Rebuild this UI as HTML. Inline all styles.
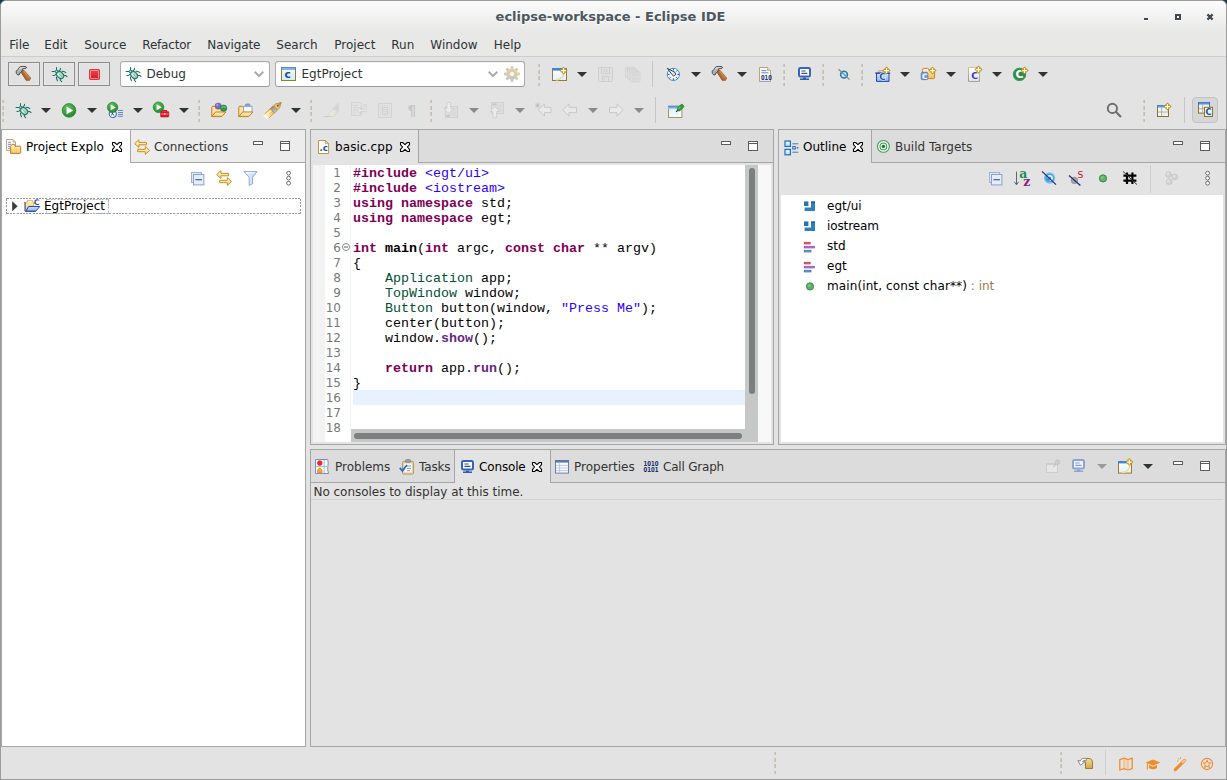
<!DOCTYPE html>
<html><head><meta charset="utf-8"><title>eclipse-workspace - Eclipse IDE</title>
<style>
*{box-sizing:border-box;margin:0;padding:0}
html,body{width:1227px;height:780px;overflow:hidden;background:#1c3b4c}
body{position:relative;font-family:"DejaVu Sans","Liberation Sans",sans-serif;font-size:12px;color:#2e3436}
.abs{position:absolute}
.ic{position:absolute;overflow:visible}
#win{position:absolute;left:0;top:0;width:1227px;height:780px;border:1px solid #9c9c9c;border-radius:6px 6px 0 0;overflow:hidden;background:#e3e3e3}
#win>*{margin:-1px 0 0 -1px}
#title{position:absolute;left:0;top:0;width:1227px;height:57px;background:linear-gradient(#fbfbfb 0px,#fbfbfb 2px,#e8e8e7 32px,#e8e8e7 57px);border-bottom:1px solid #cdcdcd}
#ttext{position:absolute;left:0;width:1221px;top:8px;text-align:center;font-weight:bold;font-size:13px;color:#4b575f;text-shadow:0 1px 0 rgba(255,255,255,.75);line-height:17px;white-space:nowrap}
.t{position:absolute;white-space:nowrap;line-height:16px}
.mi{position:absolute;white-space:nowrap;line-height:16px;color:#2e3436}
.dsep{position:absolute;width:2px;height:22.2px;background:linear-gradient(90deg,rgba(227,227,227,.55),rgba(227,227,227,.05)),repeating-linear-gradient(#c0b6a6 0px,#c0b6a6 3.4px,transparent 3.4px,transparent 6.2px)}
.code{position:absolute;font-family:"Liberation Mono","DejaVu Sans Mono",monospace;font-size:13.33px;line-height:15px;white-space:pre;color:#000}
.kw{color:#7f0055;font-weight:bold}
.inc{color:#2a00ff}
.ty{color:#005032}
.fn{font-weight:bold}
.mf{color:#642880;font-weight:bold}
.ln{position:absolute;text-align:right;font-size:12px;line-height:15px;color:#787878;white-space:pre}
</style></head><body>
<div id="win">
<div id="title"></div>
<div id="ttext">eclipse-workspace - Eclipse IDE</div>
<div class="abs" style="left:1144px;top:18px;width:4px;height:2px;background:#3b4a54;box-shadow:0 1px 0 #fff"></div>
<div class="abs" style="left:1175px;top:14px;width:6px;height:6px;border:2px solid #3b4a54;box-shadow:0 1px 0 #fff"></div>
<svg class="ic" style="left:1207px;top:14px" width="6" height="7" viewBox="0 0 6 7"><path d="M0.4 1.4L5.6 6.6M5.6 1.4L0.4 6.6" stroke="#fff" stroke-width="2.2"/><path d="M0.4 0.4L5.6 5.6M5.6 0.4L0.4 5.6" stroke="#3b4a54" stroke-width="2.2"/></svg>
<div class="mi" style="left:9.3px;top:37px;">File</div>
<div class="mi" style="left:44.3px;top:37px;">Edit</div>
<div class="mi" style="left:84.3px;top:37px;letter-spacing:0.15px">Source</div>
<div class="mi" style="left:142.3px;top:37px;letter-spacing:-0.2px">Refactor</div>
<div class="mi" style="left:207.3px;top:37px;letter-spacing:-0.09px">Navigate</div>
<div class="mi" style="left:276.3px;top:37px;">Search</div>
<div class="mi" style="left:334.3px;top:37px;">Project</div>
<div class="mi" style="left:391.3px;top:37px;">Run</div>
<div class="mi" style="left:430.3px;top:37px;">Window</div>
<div class="mi" style="left:493.8px;top:37px;">Help</div>
<div class="abs" style="left:8px;top:62px;width:32px;height:24px;border:1px solid #8c8c8c;background:#e2e2e2;box-shadow:inset 0 0 0 1px #e9e9e9"></div>
<svg class="ic" style="left:15px;top:66px" width="16" height="16" viewBox="0 0 16 16" ><linearGradient id="hmh" x1="0" y1="1" x2="1" y2="0"><stop offset="0" stop-color="#8a5a2a"/><stop offset="1" stop-color="#c98a4a"/></linearGradient><linearGradient id="hmg" x1="0" y1="0" x2="1" y2="1"><stop offset="0" stop-color="#dcdcdc"/><stop offset="1" stop-color="#74777a"/></linearGradient><path d="M7.4 4L9 4.3L15.8 12L14.5 14.5H11.2L6.2 6.5Z" fill="#b26c2e" stroke="#85491a" stroke-width="0.5" stroke-linejoin="round"/><path d="M8.6 5.2L14.6 12.2" stroke="#cc8e50" stroke-width="1.3"/><path d="M6.6 6.6L11.4 14.2" stroke="#7a4414" stroke-width="0.8" stroke-dasharray="1 0.8"/><path d="M5.3 0.5H10.8L11.7 1.5L10.5 2.6H7.8L7.5 4L6.2 6.2L4.7 7.1L4.5 8.6L2.9 9.1L1.3 7.4L1.2 4.9L3.1 3.7L3.5 2.2Z" fill="url(#hmg)" stroke="#454748" stroke-width="0.9" stroke-linejoin="round"/><path d="M4.2 3.4L6.4 1.6H9.4" stroke="#f0f0f0" stroke-width="0.9" fill="none" opacity="0.8"/></svg>
<div class="abs" style="left:43px;top:62px;width:32px;height:24px;border:1px solid #8c8c8c;background:#e2e2e2;box-shadow:inset 0 0 0 1px #e9e9e9"></div>
<svg class="ic" style="left:51px;top:67px" width="16" height="16" viewBox="0 0 16 16" ><g stroke="#1f6f50" stroke-width="1.05" fill="none" stroke-linecap="round" stroke-linejoin="round"><path d="M5.5 0.4V2.8M1.1 4.4H3.9M9.5 1.2L9.3 2.7L8.2 3.6M11 4.2L12.9 4.5L14.9 5.6M13.1 8.4L14.7 8.5L16 9.6M1.9 8.5L3.9 8.2L4.9 7.3M5.5 10.1L5.6 11.8L6.5 13.8M9.3 12.1L9.5 13.5L10.7 14.7"/></g><radialGradient id="bgd" cx="0.4" cy="0.35" r="0.7"><stop offset="0" stop-color="#f0f8e8"/><stop offset="1" stop-color="#86c46e"/></radialGradient><ellipse cx="9.1" cy="8" rx="2.9" ry="4.1" transform="rotate(-45 9.1 8)" fill="url(#bgd)" stroke="#1f7a98" stroke-width="1.2"/><path d="M8 6.8L10.6 9.6" stroke="#5aa650" stroke-width="0.7"/><circle cx="5.7" cy="4.6" r="1.4" fill="#4f9a4a" stroke="#1f7a98" stroke-width="1"/><circle cx="5.4" cy="4.3" r="0.6" fill="#eaf6e0"/></svg>
<div class="abs" style="left:78px;top:62px;width:32px;height:24px;border:1px solid #8c8c8c;background:#e2e2e2;box-shadow:inset 0 0 0 1px #e9e9e9"></div>
<svg class="ic" style="left:86px;top:67px" width="16" height="16" viewBox="0 0 16 16" ><linearGradient id="stp" x1="0" y1="0" x2="0" y2="1"><stop offset="0" stop-color="#ee4450"/><stop offset="1" stop-color="#e01424"/></linearGradient><rect x="3" y="2" width="11" height="11" rx="1.8" fill="#de2a36"/><rect x="4.4" y="3.4" width="8.2" height="8.2" rx="0.8" fill="url(#stp)" stroke="#f8aab0" stroke-width="0.9"/></svg>
<div class="abs" style="left:120px;top:61px;width:150px;height:26px;background:#fff;border:1px solid #acacac;border-bottom-color:#9a9a9a;border-radius:3px;box-shadow:inset 0 1px 1px rgba(0,0,0,.06)"></div>
<svg class="ic" style="left:125px;top:67px" width="16" height="16" viewBox="0 0 16 16" ><g stroke="#1f6f50" stroke-width="1.05" fill="none" stroke-linecap="round" stroke-linejoin="round"><path d="M5.5 0.4V2.8M1.1 4.4H3.9M9.5 1.2L9.3 2.7L8.2 3.6M11 4.2L12.9 4.5L14.9 5.6M13.1 8.4L14.7 8.5L16 9.6M1.9 8.5L3.9 8.2L4.9 7.3M5.5 10.1L5.6 11.8L6.5 13.8M9.3 12.1L9.5 13.5L10.7 14.7"/></g><radialGradient id="bgd" cx="0.4" cy="0.35" r="0.7"><stop offset="0" stop-color="#f0f8e8"/><stop offset="1" stop-color="#86c46e"/></radialGradient><ellipse cx="9.1" cy="8" rx="2.9" ry="4.1" transform="rotate(-45 9.1 8)" fill="url(#bgd)" stroke="#1f7a98" stroke-width="1.2"/><path d="M8 6.8L10.6 9.6" stroke="#5aa650" stroke-width="0.7"/><circle cx="5.7" cy="4.6" r="1.4" fill="#4f9a4a" stroke="#1f7a98" stroke-width="1"/><circle cx="5.4" cy="4.3" r="0.6" fill="#eaf6e0"/></svg>
<div class="t" style="left:146.5px;top:66px;color:#2e3436">Debug</div>
<svg class="ic" style="left:254px;top:71px" width="10" height="6" viewBox="0 0 10 6"><path d="M0.7 0.7L5 5L9.3 0.7" fill="none" stroke="#a9acad" stroke-width="2"/></svg>
<div class="abs" style="left:275px;top:61px;width:250px;height:26px;background:#fff;border:1px solid #acacac;border-bottom-color:#9a9a9a;border-radius:3px;box-shadow:inset 0 1px 1px rgba(0,0,0,.06)"></div>
<svg class="ic" style="left:281px;top:67px" width="16" height="16" viewBox="0 0 16 16" ><linearGradient id="cpj" x1="0" y1="0" x2="0" y2="1"><stop offset="0" stop-color="#f2f9fe"/><stop offset="1" stop-color="#d4ebfa"/></linearGradient><rect x="0.5" y="0.5" width="14" height="13" fill="url(#cpj)" stroke="#9a7a22" stroke-width="1"/><rect x="0" y="0" width="15" height="2.6" fill="#4a86c8"/><path d="M1 1.3H14" stroke="#b9d6f2" stroke-width="0.7"/><text x="6.7" y="10.9" font-family="DejaVu Sans, sans-serif" font-weight="bold" font-size="10.6" fill="#1d4f86" text-anchor="middle">c</text></svg>
<div class="t" style="left:301.5px;top:66px;color:#2e3436">EgtProject</div>
<svg class="ic" style="left:488px;top:71px" width="10" height="6" viewBox="0 0 10 6"><path d="M0.7 0.7L5 5L9.3 0.7" fill="none" stroke="#a9acad" stroke-width="2"/></svg>
<svg class="ic" style="left:504px;top:66px" width="16" height="16" viewBox="0 0 16 16" ><linearGradient id="gg" x1="0" y1="0" x2="0" y2="1"><stop offset="0" stop-color="#ded3a4"/><stop offset="1" stop-color="#cbc8bd"/></linearGradient><g fill="url(#gg)"><rect x="6.6" y="0" width="2.8" height="16" rx="0.8" transform="rotate(0 8 8)"/><rect x="6.6" y="0" width="2.8" height="16" rx="0.8" transform="rotate(45 8 8)"/><rect x="6.6" y="0" width="2.8" height="16" rx="0.8" transform="rotate(90 8 8)"/><rect x="6.6" y="0" width="2.8" height="16" rx="0.8" transform="rotate(135 8 8)"/><circle cx="8" cy="8" r="5.6"/></g><circle cx="8" cy="8" r="2.1" fill="#fff"/></svg>
<div class="dsep" style="left:538px;top:63.5px"></div>
<svg class="ic" style="left:552px;top:66px" width="16" height="16" viewBox="0 0 16 16" ><linearGradient id="nw" x1="0" y1="0" x2="0" y2="1"><stop offset="0" stop-color="#ffffff"/><stop offset="1" stop-color="#dff0fd"/></linearGradient><rect x="0.5" y="2.5" width="14" height="12" fill="url(#nw)" stroke="#9a7a2e" stroke-width="1"/><rect x="0" y="2" width="15" height="2.6" fill="#3f86cf"/><path d="M4 14Q11 13.6 12.4 6.2" stroke="#f3dc9a" stroke-width="1.6" fill="none"/><path d="M11.6 0.8999999999999995L15.3 4.6L11.6 8.3L7.8999999999999995 4.6Z" fill="#bf961f" stroke="#bf961f" stroke-width="0.5" stroke-linejoin="round"/><path d="M11.6 2.1999999999999993V7.000000000000001M9.2 4.6H14.0" stroke="#fffbe6" stroke-width="1.25"/></svg>
<svg class="ic" style="left:577px;top:72px" width="10" height="5" viewBox="0 0 10 5"><path d="M0 0H10L5 5Z" fill="#2e3436"/></svg>
<svg class="ic" style="left:598px;top:66px" width="16" height="16" viewBox="0 0 16 16" ><g transform="translate(0 1) scale(1.0)"><path d="M1.2 0.5H13.8Q14.5 0.5 14.5 1.2V13.8Q14.5 14.5 13.8 14.5H1.2Q0.5 14.5 0.5 13.8V1.2Q0.5 0.5 1.2 0.5Z" fill="#e0e0e0" stroke="#cfcfcf" stroke-width="1"/><path d="M3.5 0.5V6.5H11.5V0.5M4.5 14.5V9.5H10.5V14.5M6.2 10.8V13.4" fill="none" stroke="#cfcfcf" stroke-width="1"/><path d="M5 2.5H10M5 4.3H10" stroke="#cfcfcf" stroke-width="0.8"/></g></svg>
<svg class="ic" style="left:625px;top:66px" width="16" height="16" viewBox="0 0 16 16" ><g transform="translate(0 1) scale(0.7)"><path d="M1.2 0.5H13.8Q14.5 0.5 14.5 1.2V13.8Q14.5 14.5 13.8 14.5H1.2Q0.5 14.5 0.5 13.8V1.2Q0.5 0.5 1.2 0.5Z" fill="#e0e0e0" stroke="#cfcfcf" stroke-width="1"/><path d="M3.5 0.5V6.5H11.5V0.5M4.5 14.5V9.5H10.5V14.5M6.2 10.8V13.4" fill="none" stroke="#cfcfcf" stroke-width="1"/><path d="M5 2.5H10M5 4.3H10" stroke="#cfcfcf" stroke-width="0.8"/></g><g transform="translate(2.4 3.2) scale(0.7)"><path d="M1.2 0.5H13.8Q14.5 0.5 14.5 1.2V13.8Q14.5 14.5 13.8 14.5H1.2Q0.5 14.5 0.5 13.8V1.2Q0.5 0.5 1.2 0.5Z" fill="#e0e0e0" stroke="#cfcfcf" stroke-width="1"/><path d="M3.5 0.5V6.5H11.5V0.5M4.5 14.5V9.5H10.5V14.5M6.2 10.8V13.4" fill="none" stroke="#cfcfcf" stroke-width="1"/><path d="M5 2.5H10M5 4.3H10" stroke="#cfcfcf" stroke-width="0.8"/></g><g transform="translate(4.8 5.6) scale(0.7)"><path d="M1.2 0.5H13.8Q14.5 0.5 14.5 1.2V13.8Q14.5 14.5 13.8 14.5H1.2Q0.5 14.5 0.5 13.8V1.2Q0.5 0.5 1.2 0.5Z" fill="#e0e0e0" stroke="#cfcfcf" stroke-width="1"/><path d="M3.5 0.5V6.5H11.5V0.5M4.5 14.5V9.5H10.5V14.5M6.2 10.8V13.4" fill="none" stroke="#cfcfcf" stroke-width="1"/><path d="M5 2.5H10M5 4.3H10" stroke="#cfcfcf" stroke-width="0.8"/></g></svg>
<div class="abs" style="left:652px;top:61px;width:1px;height:26px;background:#c6c6c6"></div>
<svg class="ic" style="left:666px;top:66px" width="16" height="16" viewBox="0 0 16 16" ><circle cx="7.4" cy="8.4" r="6.1" fill="#f2f7fe" stroke="#3a88d4" stroke-width="0.9"/><path d="M13.30 8.40L11.30 8.40M11.57 12.57L10.16 11.16M7.40 14.30L7.40 12.30M3.23 12.57L4.64 11.16M1.50 8.40L3.50 8.40M7.40 2.50L7.40 4.50M11.57 4.23L10.16 5.64" stroke="#1f3f6f" stroke-width="0.9"/><path d="M1.3 2.3L9 6.4L9.8 8.6L7.6 9.9L6 8.6Z" fill="#f4ecc0" stroke="#1f3f8a" stroke-width="1" stroke-linejoin="round"/></svg>
<svg class="ic" style="left:691px;top:72px" width="10" height="5" viewBox="0 0 10 5"><path d="M0 0H10L5 5Z" fill="#2e3436"/></svg>
<svg class="ic" style="left:711px;top:66px" width="16" height="16" viewBox="0 0 16 16" ><linearGradient id="hmh" x1="0" y1="1" x2="1" y2="0"><stop offset="0" stop-color="#8a5a2a"/><stop offset="1" stop-color="#c98a4a"/></linearGradient><linearGradient id="hmg" x1="0" y1="0" x2="1" y2="1"><stop offset="0" stop-color="#dcdcdc"/><stop offset="1" stop-color="#74777a"/></linearGradient><path d="M7.4 4L9 4.3L15.8 12L14.5 14.5H11.2L6.2 6.5Z" fill="#b26c2e" stroke="#85491a" stroke-width="0.5" stroke-linejoin="round"/><path d="M8.6 5.2L14.6 12.2" stroke="#cc8e50" stroke-width="1.3"/><path d="M6.6 6.6L11.4 14.2" stroke="#7a4414" stroke-width="0.8" stroke-dasharray="1 0.8"/><path d="M5.3 0.5H10.8L11.7 1.5L10.5 2.6H7.8L7.5 4L6.2 6.2L4.7 7.1L4.5 8.6L2.9 9.1L1.3 7.4L1.2 4.9L3.1 3.7L3.5 2.2Z" fill="url(#hmg)" stroke="#454748" stroke-width="0.9" stroke-linejoin="round"/><path d="M4.2 3.4L6.4 1.6H9.4" stroke="#f0f0f0" stroke-width="0.9" fill="none" opacity="0.8"/></svg>
<svg class="ic" style="left:737px;top:72px" width="10" height="5" viewBox="0 0 10 5"><path d="M0 0H10L5 5Z" fill="#2e3436"/></svg>
<svg class="ic" style="left:758px;top:67px" width="16" height="16" viewBox="0 0 16 16" ><path d="M1.5 0.5H9.5L12.5 3.5V14.5H1.5Z" fill="#f6f8fc" stroke="#b8a877" stroke-width="1"/><path d="M9.5 0.5V3.5H12.5" fill="#e8d9a0" stroke="#b8a877" stroke-width="0.8"/><path d="M3.4 3.6H8.2M3.4 5.8H10.4" stroke="#6a83c4" stroke-width="1"/><rect x="1.5" y="13.8" width="11" height="0.9" fill="#8fa0c8"/><text x="8.4" y="13" font-family="DejaVu Sans, sans-serif" font-weight="bold" font-size="6.9" fill="#1c2f6b" text-anchor="middle" textLength="10.8" lengthAdjust="spacingAndGlyphs">010</text></svg>
<div class="dsep" style="left:783px;top:63.5px"></div>
<svg class="ic" style="left:797px;top:66px" width="16" height="16" viewBox="0 0 16 16" ><rect x="2" y="2" width="11" height="8.6" rx="1.4" fill="#ffffff" stroke="#3565b4" stroke-width="2"/><path d="M4.4 5H8.6M4.4 7.4H10.4" stroke="#2f4f9a" stroke-width="1.1"/><path d="M6 11.4H9V12.6H12V14H3V12.6H6Z" fill="#2f5fae"/></svg>
<div class="dsep" style="left:822px;top:63.5px"></div>
<svg class="ic" style="left:836px;top:66px" width="16" height="16" viewBox="0 0 16 16" ><circle cx="8" cy="8.6" r="3.4" fill="#cfe6f6" stroke="#1f7db8" stroke-width="1.6"/><path d="M2.6 3.2L13.6 13.6" stroke="#7d868c" stroke-width="1.2"/></svg>
<div class="dsep" style="left:861px;top:63.5px"></div>
<svg class="ic" style="left:875px;top:66px" width="16" height="16" viewBox="0 0 16 16" ><linearGradient id="ncp" x1="0" y1="0" x2="0" y2="1"><stop offset="0" stop-color="#d6eafd"/><stop offset="1" stop-color="#7fb2ee"/></linearGradient><path d="M3 6.6L4 4.6H7.6L8.6 6.6" fill="#f8d8c4" stroke="#b88a88" stroke-width="0.8"/><path d="M1.5 7.2H14V15.4H1.5Z" fill="url(#ncp)" stroke="#2a40b8" stroke-width="1" stroke-linejoin="round"/><path d="M0.2 7.1H15.2" stroke="#2a40b8" stroke-width="1.1"/><text x="7.4" y="14.4" font-family="DejaVu Sans, sans-serif" font-weight="bold" font-size="8.8" fill="#1f5a9a" stroke="#eaf4fe" stroke-width="1.2" paint-order="stroke" text-anchor="middle">C</text><path d="M11.5 0.7999999999999998L15.2 4.5L11.5 8.2L7.8 4.5Z" fill="#bf961f" stroke="#bf961f" stroke-width="0.5" stroke-linejoin="round"/><path d="M11.5 2.0999999999999996V6.8999999999999995M9.1 4.5H13.899999999999999" stroke="#fffbe6" stroke-width="1.25"/></svg>
<svg class="ic" style="left:900px;top:72px" width="10" height="5" viewBox="0 0 10 5"><path d="M0 0H10L5 5Z" fill="#2e3436"/></svg>
<svg class="ic" style="left:920px;top:66px" width="16" height="16" viewBox="0 0 16 16" ><linearGradient id="nf" x1="0" y1="0" x2="0" y2="1"><stop offset="0" stop-color="#fff0c4"/><stop offset="1" stop-color="#f6bc58"/></linearGradient><path d="M2.4 4.4Q2.4 2.4 4.2 2.4H7.4Q8.8 2.4 9 4H13.6Q14.6 4 14.6 5V11.6Q14.6 12.6 13.6 12.6H3.4Q2.4 12.6 2.4 11.6Z" fill="url(#nf)" stroke="#cf7f1f" stroke-width="1"/><path d="M3.8 3.6H7.8" stroke="#fff" stroke-width="1"/><rect x="1.2" y="6.4" width="6.6" height="7.2" rx="1.2" fill="#7f9fe0" stroke="#5a80c8" stroke-width="1"/><text x="4.6" y="12.6" font-family="DejaVu Sans, sans-serif" font-weight="bold" font-size="7.4" fill="#ffffff" text-anchor="middle">C</text><path d="M12.5 0.7999999999999998L16.2 4.5L12.5 8.2L8.8 4.5Z" fill="#bf961f" stroke="#bf961f" stroke-width="0.5" stroke-linejoin="round"/><path d="M12.5 2.0999999999999996V6.8999999999999995M10.100000000000001 4.5H14.899999999999999" stroke="#fffbe6" stroke-width="1.25"/></svg>
<svg class="ic" style="left:946px;top:72px" width="10" height="5" viewBox="0 0 10 5"><path d="M0 0H10L5 5Z" fill="#2e3436"/></svg>
<svg class="ic" style="left:967px;top:66px" width="16" height="16" viewBox="0 0 16 16" ><linearGradient id="ncf" x1="0" y1="0" x2="0" y2="1"><stop offset="0" stop-color="#ffffff"/><stop offset="1" stop-color="#dde8f8"/></linearGradient><linearGradient id="ncfb" x1="0" y1="0" x2="0" y2="1"><stop offset="0" stop-color="#d6c27c"/><stop offset="1" stop-color="#9c9c98"/></linearGradient><path d="M1.5 1.4H12.4V15.4H1.5Z" fill="url(#ncf)" stroke="url(#ncfb)" stroke-width="1"/><text x="7.5" y="12.8" font-family="DejaVu Sans, sans-serif" font-weight="bold" font-size="9.2" fill="#3a3ac8" text-anchor="middle">C</text><path d="M11.5 -0.20000000000000018L15.2 3.5L11.5 7.2L7.8 3.5Z" fill="#bf961f" stroke="#bf961f" stroke-width="0.5" stroke-linejoin="round"/><path d="M11.5 1.0999999999999999V5.9M9.1 3.5H13.899999999999999" stroke="#fffbe6" stroke-width="1.25"/></svg>
<svg class="ic" style="left:992px;top:72px" width="10" height="5" viewBox="0 0 10 5"><path d="M0 0H10L5 5Z" fill="#2e3436"/></svg>
<svg class="ic" style="left:1012px;top:66px" width="16" height="16" viewBox="0 0 16 16" ><circle cx="7.5" cy="8.4" r="6.6" fill="#2f8a4a"/><circle cx="7.5" cy="8.4" r="6.2" fill="none" stroke="#4aa262" stroke-width="0.8"/><text x="7.5" y="12.3" font-family="DejaVu Sans, sans-serif" font-weight="bold" font-size="11" fill="#ffffff" text-anchor="middle">C</text><path d="M12.5 0.7999999999999998L16.2 4.5L12.5 8.2L8.8 4.5Z" fill="#bf961f" stroke="#bf961f" stroke-width="0.5" stroke-linejoin="round"/><path d="M12.5 2.0999999999999996V6.8999999999999995M10.100000000000001 4.5H14.899999999999999" stroke="#fffbe6" stroke-width="1.25"/></svg>
<svg class="ic" style="left:1038px;top:72px" width="10" height="5" viewBox="0 0 10 5"><path d="M0 0H10L5 5Z" fill="#2e3436"/></svg>
<div class="dsep" style="left:2px;top:99.5px"></div>
<svg class="ic" style="left:15px;top:103px" width="16" height="16" viewBox="0 0 16 16" ><g stroke="#1f6f50" stroke-width="1.05" fill="none" stroke-linecap="round" stroke-linejoin="round"><path d="M5.5 0.4V2.8M1.1 4.4H3.9M9.5 1.2L9.3 2.7L8.2 3.6M11 4.2L12.9 4.5L14.9 5.6M13.1 8.4L14.7 8.5L16 9.6M1.9 8.5L3.9 8.2L4.9 7.3M5.5 10.1L5.6 11.8L6.5 13.8M9.3 12.1L9.5 13.5L10.7 14.7"/></g><radialGradient id="bgd" cx="0.4" cy="0.35" r="0.7"><stop offset="0" stop-color="#f0f8e8"/><stop offset="1" stop-color="#86c46e"/></radialGradient><ellipse cx="9.1" cy="8" rx="2.9" ry="4.1" transform="rotate(-45 9.1 8)" fill="url(#bgd)" stroke="#1f7a98" stroke-width="1.2"/><path d="M8 6.8L10.6 9.6" stroke="#5aa650" stroke-width="0.7"/><circle cx="5.7" cy="4.6" r="1.4" fill="#4f9a4a" stroke="#1f7a98" stroke-width="1"/><circle cx="5.4" cy="4.3" r="0.6" fill="#eaf6e0"/></svg>
<svg class="ic" style="left:41px;top:108px" width="10" height="5" viewBox="0 0 10 5"><path d="M0 0H10L5 5Z" fill="#2e3436"/></svg>
<svg class="ic" style="left:61px;top:102px" width="16" height="16" viewBox="0 0 16 16" ><radialGradient id="rg80" cx="0.4" cy="0.3" r="0.8"><stop offset="0" stop-color="#5cc45a"/><stop offset="1" stop-color="#1f7d2c"/></radialGradient><circle cx="8" cy="8.4" r="6.8" fill="url(#rg80)" stroke="#2a8a35" stroke-width="0.8"/><path d="M5.552 4.5920000000000005L12.216000000000001 8.4L5.552 12.208Z" fill="#fff"/></svg>
<svg class="ic" style="left:87px;top:108px" width="10" height="5" viewBox="0 0 10 5"><path d="M0 0H10L5 5Z" fill="#2e3436"/></svg>
<svg class="ic" style="left:107px;top:102px" width="16" height="16" viewBox="0 0 16 16" ><circle cx="5.8" cy="12" r="3.5" fill="#fdfeff" stroke="#2f6fc0" stroke-width="1.1"/><path d="M4.8 10.4L7 13.6M4.6 13.4L5.6 10.6" stroke="#2a3f7a" stroke-width="0.9"/><path d="M11 8.5H16M11 10.5H16M11 12.4H16M11 14.3H16" stroke="#5f7cba" stroke-width="0.9"/><radialGradient id="rg56" cx="0.4" cy="0.3" r="0.8"><stop offset="0" stop-color="#5cc45a"/><stop offset="1" stop-color="#1f7d2c"/></radialGradient><circle cx="5.6" cy="5.4" r="5.2" fill="url(#rg56)" stroke="#2a8a35" stroke-width="0.8"/><path d="M3.7279999999999998 2.488L8.824 5.4L3.7279999999999998 8.312000000000001Z" fill="#fff"/></svg>
<svg class="ic" style="left:133px;top:108px" width="10" height="5" viewBox="0 0 10 5"><path d="M0 0H10L5 5Z" fill="#2e3436"/></svg>
<svg class="ic" style="left:153px;top:102px" width="16" height="16" viewBox="0 0 16 16" ><radialGradient id="rg55" cx="0.4" cy="0.3" r="0.8"><stop offset="0" stop-color="#5cc45a"/><stop offset="1" stop-color="#1f7d2c"/></radialGradient><circle cx="5.5" cy="5.3" r="5.3" fill="url(#rg55)" stroke="#2a8a35" stroke-width="0.8"/><path d="M3.592 2.332L8.786 5.3L3.592 8.268Z" fill="#fff"/><rect x="7.6" y="9.6" width="8.2" height="5.4" rx="0.8" fill="#e01b24" stroke="#b80f18" stroke-width="0.6"/><path d="M10 9.6V8.5H13.4V9.6" fill="none" stroke="#d0121b" stroke-width="1.1"/><path d="M8 12H15.4" stroke="#f6989c" stroke-width="0.8"/><rect x="10.9" y="11.2" width="1.6" height="1.6" fill="#fbd0d2"/></svg>
<svg class="ic" style="left:179px;top:108px" width="10" height="5" viewBox="0 0 10 5"><path d="M0 0H10L5 5Z" fill="#2e3436"/></svg>
<div class="dsep" style="left:198px;top:99.5px"></div>
<svg class="ic" style="left:211px;top:102px" width="16" height="16" viewBox="0 0 16 16" ><linearGradient id="fo" x1="0" y1="0" x2="0" y2="1"><stop offset="0" stop-color="#fff4cc"/><stop offset="1" stop-color="#f7c968"/></linearGradient><path d="M0.8 14.5V5.4Q0.8 4.3 1.9 4.3H4.2L5.4 5.7H12.6V10" fill="#fbe3a6" stroke="#c77d1f" stroke-width="1" stroke-linejoin="round"/><circle cx="7.2" cy="4.1" r="3.2" fill="#7b62b8" stroke="#6a54a6" stroke-width="0.5"/><circle cx="6.4" cy="3.1" r="1.3" fill="#a898d8"/><circle cx="12.6" cy="6.2" r="3.3" fill="#2f9450" stroke="#268244" stroke-width="0.5"/><path d="M10.4 5.4Q12.6 4.4 14.8 5.4" stroke="#8fd0a0" stroke-width="0.9" fill="none"/><path d="M0.8 14.6L4.6 10H14.9L10.8 14.6Z" fill="url(#fo)" stroke="#c77d1f" stroke-width="1" stroke-linejoin="round"/></svg>
<svg class="ic" style="left:238px;top:102px" width="16" height="16" viewBox="0 0 16 16" ><linearGradient id="fo" x1="0" y1="0" x2="0" y2="1"><stop offset="0" stop-color="#fff4cc"/><stop offset="1" stop-color="#f7c968"/></linearGradient><path d="M0.8 14.5V5.4Q0.8 4.3 1.9 4.3H4.2L5.4 5.7H12.6V10" fill="#fbe3a6" stroke="#c77d1f" stroke-width="1" stroke-linejoin="round"/><path d="M7.4 4.2V3Q7.4 2 8.4 2H11Q12 2 12 3V4.2Z" fill="#9aa8c8" stroke="#7a8cb8" stroke-width="0.8"/><rect x="5.6" y="4.3" width="8.4" height="6" fill="#f4f7fd" stroke="#8a9cc6" stroke-width="0.9"/><path d="M0.8 14.6L4.6 10H14.9L10.8 14.6Z" fill="url(#fo)" stroke="#c77d1f" stroke-width="1" stroke-linejoin="round"/></svg>
<svg class="ic" style="left:265px;top:102px" width="16" height="16" viewBox="0 0 16 16" ><g transform="translate(8.2 8) rotate(-43)"><linearGradient id="pnb" x1="0" y1="0" x2="1" y2="0"><stop offset="0" stop-color="#fffef4"/><stop offset="1" stop-color="#f0b840"/></linearGradient><linearGradient id="pnk" x1="0" y1="0" x2="0" y2="1"><stop offset="0" stop-color="#8e8a86"/><stop offset="1" stop-color="#c9c5c0"/></linearGradient><path d="M-11 -2.9H-1V2.9H-11Z" fill="url(#pnb)"/><path d="M-9 -2.9H-1M-9 2.9H-1" stroke="#d49a2a" stroke-width="0.8"/><path d="M-8 -1H-1.5" stroke="#fff6d0" stroke-width="1.4" opacity="0.9"/><rect x="-1.2" y="-3.1" width="4.2" height="6.2" rx="0.6" fill="url(#pnk)" stroke="#8a7a62" stroke-width="0.6"/><path d="M3 -2.8L6.2 -2.7L11 0L6.2 2.7L3 2.8Z" fill="#f2c458" stroke="#c08828" stroke-width="0.8" stroke-linejoin="round"/><path d="M6.6 0H10" stroke="#2a4a9a" stroke-width="0.7"/><circle cx="6.2" cy="0" r="0.85" fill="#2a4a9a"/></g></svg>
<svg class="ic" style="left:291px;top:108px" width="10" height="5" viewBox="0 0 10 5"><path d="M0 0H10L5 5Z" fill="#2e3436"/></svg>
<div class="dsep" style="left:310px;top:99.5px"></div>
<svg class="ic" style="left:323px;top:102px" width="16" height="16" viewBox="0 0 16 16" ><path d="M0.4 14.5H9" stroke="#cdcdcd" stroke-width="1"/><path d="M4.6 14L9.6 7L15.4 1.2V9.6L11.4 14Z" fill="#dcdbd8" stroke="#d2d2d2" stroke-width="0.6"/><path d="M9.6 7L14.6 9.4L15.4 1.2Z" fill="#d4d4d4"/><path d="M5 14L9.6 7.4L13.4 9.6L10 14Z" fill="#e8e6dc"/></svg>
<svg class="ic" style="left:351px;top:102px" width="16" height="16" viewBox="0 0 16 16" ><path d="M0.5 0.5H8.5L10.5 2.5V13.5H0.5Z" fill="#e2e2e2" stroke="#d1d1d1" stroke-width="0.9"/><path d="M2.4 3.4H7M2.4 5.6H7.4M2.4 7.8H5M2.4 10H4M2.4 12H4" stroke="#d1d1d1" stroke-width="0.8"/><path d="M13 2.5H15.2V9.6H9.6V11.6L5.8 8.5L9.6 5.4V7.4H13Z" fill="#e8e8e8" stroke="#d1d1d1" stroke-width="0.9" stroke-linejoin="round"/></svg>
<svg class="ic" style="left:377px;top:102px" width="16" height="16" viewBox="0 0 16 16" ><rect x="1.5" y="1.5" width="13" height="14" fill="#e2e2e2" stroke="#d1d1d1" stroke-width="0.9"/><rect x="5.5" y="5.5" width="5" height="6.4" fill="none" stroke="#d1d1d1" stroke-width="1"/><path d="M5.5 7.6H10.5M5.5 9.7H10.5" stroke="#d1d1d1" stroke-width="0.9"/><path d="M3.6 3.4V14M12.4 3.4V14" stroke="#d1d1d1" stroke-width="0.9" stroke-dasharray="0.9 1.2"/><path d="M5.4 3.6H10.6M5.4 13.6H10.6" stroke="#d1d1d1" stroke-width="0.8" stroke-dasharray="1 0.6"/></svg>
<div class="t" style="left:407.5px;top:102px;color:#c8c8c8;font-size:13.5px;font-weight:bold">¶</div>
<div class="dsep" style="left:430px;top:99.5px"></div>
<svg class="ic" style="left:443px;top:102px" width="16" height="16" viewBox="0 0 16 16" ><rect x="2.5" y="4.5" width="12" height="11" fill="#dedede" stroke="#d1d1d1" stroke-width="1"/><path d="M8 7H13M8 9H13M8 11H13M8 13H13" stroke="#d0d0d0" stroke-width="0.8" stroke-dasharray="1.4 0.8"/><rect x="3" y="13" width="4" height="1.6" fill="#c4c4c4"/><path d="M4 0.5H7.6V6.5H10.4L5.8 11.6L1 6.5H4Z" fill="#ececec" stroke="#d1d1d1" stroke-width="1" stroke-linejoin="round"/></svg>
<svg class="ic" style="left:469px;top:108px" width="10" height="5" viewBox="0 0 10 5"><path d="M0 0H10L5 5Z" fill="#8a8a8a"/></svg>
<svg class="ic" style="left:489px;top:102px" width="16" height="16" viewBox="0 0 16 16" ><rect x="2.5" y="0.5" width="12" height="11" fill="#dedede" stroke="#d1d1d1" stroke-width="1"/><path d="M8 3H13M8 5H13M8 7H13M8 9H13" stroke="#d0d0d0" stroke-width="0.8" stroke-dasharray="1.4 0.8"/><rect x="3.4" y="1.6" width="4" height="1.6" fill="#c4c4c4"/><path d="M4 15.5H7.6V9.5H10.4L5.8 4.4L1 9.5H4Z" fill="#ececec" stroke="#d1d1d1" stroke-width="1" stroke-linejoin="round"/></svg>
<svg class="ic" style="left:515px;top:108px" width="10" height="5" viewBox="0 0 10 5"><path d="M0 0H10L5 5Z" fill="#8a8a8a"/></svg>
<svg class="ic" style="left:535px;top:102px" width="16" height="16" viewBox="0 0 16 16" ><path d="M3.4 8L9.4 2V5.4H16V10.6H9.4V14Z" fill="#e9e9e9" stroke="#c8c8c8" stroke-width="1" stroke-linejoin="round"/><path d="M2.6 0.4V6.4M0 3.4H5.4M0.8 1.4L4.6 5.4M4.6 1.4L0.8 5.4" stroke="#bdbdbd" stroke-width="0.8"/></svg>
<svg class="ic" style="left:562px;top:102px" width="16" height="16" viewBox="0 0 16 16" ><path d="M0.8 8L7 1.8V5.4H14.5V10.6H7V14.2Z" fill="#e9e9e9" stroke="#c8c8c8" stroke-width="1" stroke-linejoin="round"/></svg>
<svg class="ic" style="left:588px;top:108px" width="10" height="5" viewBox="0 0 10 5"><path d="M0 0H10L5 5Z" fill="#8a8a8a"/></svg>
<svg class="ic" style="left:608px;top:102px" width="16" height="16" viewBox="0 0 16 16" ><path d="M15.2 8L9 1.8V5.4H1.5V10.6H9V14.2Z" fill="#e9e9e9" stroke="#c8c8c8" stroke-width="1" stroke-linejoin="round"/></svg>
<svg class="ic" style="left:634px;top:108px" width="10" height="5" viewBox="0 0 10 5"><path d="M0 0H10L5 5Z" fill="#8a8a8a"/></svg>
<div class="abs" style="left:655px;top:97px;width:1px;height:26px;background:#c6c6c6"></div>
<svg class="ic" style="left:668px;top:103px" width="16" height="16" viewBox="0 0 16 16" ><linearGradient id="pn" x1="0" y1="0" x2="1" y2="1"><stop offset="0" stop-color="#d6f0fc"/><stop offset="1" stop-color="#ffffff"/></linearGradient><linearGradient id="pnt" x1="0" y1="0" x2="0" y2="1"><stop offset="0" stop-color="#3f7fc4"/><stop offset="1" stop-color="#a6ccf0"/></linearGradient><rect x="0.5" y="3.3" width="13.4" height="11.2" fill="url(#pn)" stroke="#a39466" stroke-width="1"/><rect x="0" y="2.8" width="14.4" height="3" fill="url(#pnt)"/><path d="M8.1 8.8L10 7" stroke="#222" stroke-width="1.1"/><path d="M8.6 10.4L9.8 11.6" stroke="#a8cfe6" stroke-width="0.9"/><g transform="rotate(-45 12.4 4.6)"><rect x="8.6" y="2.8" width="7.6" height="3.8" rx="1.7" fill="#2f9a3a" stroke="#1f7a2a" stroke-width="0.6"/><rect x="10.2" y="3.4" width="3" height="1.2" rx="0.6" fill="#6fca5a"/></g></svg>
<svg class="ic" style="left:1106px;top:102px" width="16" height="16" viewBox="0 0 16 16" ><circle cx="6.4" cy="6.4" r="4.6" fill="none" stroke="#6e6e6e" stroke-width="1.9"/><path d="M9.8 9.8L15 15" stroke="#6e6e6e" stroke-width="2.2"/></svg>
<div class="dsep" style="left:1143px;top:99.5px"></div>
<svg class="ic" style="left:1156px;top:102px" width="16" height="16" viewBox="0 0 16 16" ><rect x="1.5" y="3.5" width="11" height="11" fill="#eaf6fe" stroke="#8a6f2e" stroke-width="1"/><rect x="1" y="3" width="12" height="2.4" fill="#3d7fd0"/><path d="M2 4.2H12" stroke="#9cc4ee" stroke-width="0.6"/><path d="M5.6 5.4V14M2 10.0H12" stroke="#b8a67c" stroke-width="0.9"/><path d="M7.6 12.6L10.6 9.8" stroke="#f0d690" stroke-width="0.9"/><path d="M11.5 0.7000000000000002L15.3 4.5L11.5 8.3L7.7 4.5Z" fill="#bf961f" stroke="#bf961f" stroke-width="0.5" stroke-linejoin="round"/><path d="M11.5 2.0V7.000000000000001M9.0 4.5H14.0" stroke="#fffbe6" stroke-width="1.25"/></svg>
<div class="abs" style="left:1184px;top:97px;width:1px;height:26px;background:#c6c6c6"></div>
<div class="abs" style="left:1192px;top:97px;width:26px;height:26px;background:#d6d6d6;border:1px solid #c3c3c3;border-radius:4px"></div>
<svg class="ic" style="left:1197px;top:102px" width="16" height="16" viewBox="0 0 16 16" ><rect x="1.5" y="0.5" width="11" height="10.6" fill="#eaf6fe" stroke="#8a6f2e" stroke-width="1"/><rect x="1" y="0" width="12" height="2.4" fill="#2f6fd0"/><path d="M2 1.2H12" stroke="#9cc4ee" stroke-width="0.6"/><path d="M5.6 2.4V10.6M2 6.7H12" stroke="#b8a67c" stroke-width="0.9"/><linearGradient id="cpb" x1="0" y1="0" x2="1" y2="1"><stop offset="0" stop-color="#ffffff"/><stop offset="1" stop-color="#d8ecfb"/></linearGradient><rect x="7.5" y="5.3" width="8" height="9.2" fill="url(#cpb)" stroke="#8a6f2e" stroke-width="1"/><text x="11.6" y="13.1" font-family="DejaVu Sans, sans-serif" font-weight="bold" font-size="8.2" fill="#1f4f8c" text-anchor="middle">C</text></svg>
<div class="abs" style="left:1px;top:129px;width:305px;height:618px;border:1px solid #a6a6a6;background:#e3e3e3"></div>
<div class="abs" style="left:2px;top:130px;width:303px;height:32px;background:#ececec"></div>
<div class="abs" style="left:2px;top:162px;width:303px;height:1px;background:#a6a6a6"></div>
<div class="abs" style="left:2px;top:130px;width:129px;height:33px;background:#fff;border-right:1px solid #a6a6a6"></div>
<div class="abs" style="left:2px;top:163px;width:303px;height:583px;background:#fff"></div>
<svg class="ic" style="left:6px;top:139px" width="16" height="16" viewBox="0 0 16 16" ><path d="M0.5 0.5H7L9.5 3V11.4H0.5Z" fill="#f4f6fb" stroke="#b5a77a" stroke-width="1"/><path d="M7 0.5V3H9.5" fill="#e6d9a8" stroke="#b5a77a" stroke-width="0.7"/><path d="M2 3.4H5M2 5.4H5M2 7.4H4.4M2 9.4H4" stroke="#6f8fd0" stroke-width="0.9"/><linearGradient id="pe" x1="0" y1="0" x2="0" y2="1"><stop offset="0" stop-color="#fff3c4"/><stop offset="1" stop-color="#f6c455"/></linearGradient><path d="M4.6 14.4V7.4Q4.6 6.6 5.4 6.4L6 5.4H8.4L9 7.2H13.8Q14.7 7.2 14.7 8.2V13.5Q14.7 14.4 13.8 14.4Z" fill="url(#pe)" stroke="#c07c28" stroke-width="1" stroke-linejoin="round"/></svg>
<div class="t" style="left:26px;top:139px;color:#000">Project Explo</div>
<svg class="ic" style="left:112px;top:142px" width="10" height="10" viewBox="0 0 10 10"><path d="M0.5 0.5H2.6L5 2.6L7.4 0.5H9.5V2.6L7.4 5L9.5 7.4V9.5H7.4L5 7.4L2.6 9.5H0.5V7.4L2.6 5L0.5 2.6Z" fill="#fff" stroke="#000" stroke-width="1.1" stroke-linejoin="round"/></svg>
<svg class="ic" style="left:134px;top:139px" width="16" height="16" viewBox="0 0 16 16" ><linearGradient id="cn" x1="0" y1="0" x2="0" y2="1"><stop offset="0" stop-color="#fffbe8"/><stop offset="1" stop-color="#f6d27a"/></linearGradient><path d="M0.7 4.6L4.9 0.7V3.4H12.5V5.8H4.9V8.5Z" fill="url(#cn)" stroke="#c9901f" stroke-width="1" stroke-linejoin="round"/><path d="M15.5 11.5L11.3 7.6V10.3H3.7V12.7H11.3V15.4Z" fill="url(#cn)" stroke="#c9901f" stroke-width="1" stroke-linejoin="round"/></svg>
<div class="t" style="left:154px;top:139px;color:#333">Connections</div>
<div class="abs" style="left:253px;top:141px;width:10px;height:4px;background:#fff;border:1px solid #5a5a5a;border-radius:0.5px;box-shadow:0 0 1px rgba(255,255,255,.7)"></div>
<div class="abs" style="left:280px;top:141px;width:10px;height:10px;background:#fff;border:1px solid #5a5a5a;border-radius:0.5px;box-shadow:0 0 1px rgba(255,255,255,.7)"></div>
<div class="abs" style="left:280px;top:143px;width:10px;height:1px;background:#5a5a5a"></div>
<svg class="ic" style="left:190px;top:170px" width="16" height="16" viewBox="0 0 16 16" ><rect x="1.5" y="2.5" width="10" height="10" fill="#dfe9f7" stroke="#9db3d4" stroke-width="1"/><rect x="3.5" y="4.5" width="10.4" height="10.4" fill="#e4edf9" stroke="#8aa2ca" stroke-width="1"/><path d="M5.4 9.7H12" stroke="#1a4a8a" stroke-width="1.1"/></svg>
<svg class="ic" style="left:216px;top:170px" width="16" height="16" viewBox="0 0 16 16" ><linearGradient id="cn" x1="0" y1="0" x2="0" y2="1"><stop offset="0" stop-color="#fffbe8"/><stop offset="1" stop-color="#f6d27a"/></linearGradient><path d="M0.7 4.6L4.9 0.7V3.4H12.5V5.8H4.9V8.5Z" fill="url(#cn)" stroke="#c9901f" stroke-width="1" stroke-linejoin="round"/><path d="M15.5 11.5L11.3 7.6V10.3H3.7V12.7H11.3V15.4Z" fill="url(#cn)" stroke="#c9901f" stroke-width="1" stroke-linejoin="round"/></svg>
<svg class="ic" style="left:243px;top:170px" width="16" height="16" viewBox="0 0 16 16" ><linearGradient id="fl" x1="0" y1="0" x2="1" y2="0"><stop offset="0" stop-color="#f4f9fe"/><stop offset="1" stop-color="#bcd2ec"/></linearGradient><path d="M1 1.6H14L9.6 7.2V13.6L6.2 15.4V7.2Z" fill="url(#fl)" stroke="#8fa8cc" stroke-width="1" stroke-linejoin="round"/><path d="M2.8 2.8H12.2" stroke="#fff" stroke-width="0.9"/></svg>
<svg class="ic" style="left:284px;top:170px" width="16" height="16" viewBox="0 0 16 16" ><g fill="#fff" stroke="#5c5c5c" stroke-width="0.9"><circle cx="4.6" cy="3.2" r="1.9"/><circle cx="4.6" cy="8.2" r="1.9"/><circle cx="4.6" cy="13.2" r="1.9"/></g></svg>
<div class="abs" style="left:6px;top:198px;width:295px;height:1px;background:repeating-linear-gradient(90deg,#969696 0px,#969696 2px,transparent 2px,transparent 3.2px);background-position:1px 0"></div>
<div class="abs" style="left:6px;top:212.5px;width:295px;height:1px;background:repeating-linear-gradient(90deg,#969696 0px,#969696 2px,transparent 2px,transparent 3.2px);background-position:1px 0"></div>
<div class="abs" style="left:6px;top:198px;width:1px;height:15.5px;background:repeating-linear-gradient(180deg,#969696 0px,#969696 2px,transparent 2px,transparent 3.2px);background-position:0 1px"></div>
<div class="abs" style="left:300px;top:198px;width:1px;height:15.5px;background:repeating-linear-gradient(180deg,#969696 0px,#969696 2px,transparent 2px,transparent 3.2px);background-position:0 1px"></div>
<svg class="ic" style="left:12px;top:200.5px" width="6" height="10.5" viewBox="0 0 6 10.5"><path d="M0.2 0.2L5.6 5.25L0.2 10.3Z" fill="#3a3a3a"/></svg>
<svg class="ic" style="left:24px;top:197px" width="16" height="16" viewBox="0 0 16 16" ><linearGradient id="cf" x1="0" y1="0" x2="0" y2="1"><stop offset="0" stop-color="#cfe8fd"/><stop offset="1" stop-color="#86b8ee"/></linearGradient><linearGradient id="cfy" x1="0" y1="0" x2="0" y2="1"><stop offset="0" stop-color="#fff0c0"/><stop offset="1" stop-color="#f4cf78"/></linearGradient><path d="M1.4 13.4V5.6H3L3.4 3.4H8.6L9 5.6H9.6V9.4H4.6L1.8 13.6Z" fill="url(#cfy)" stroke="#d4a24a" stroke-width="0.8" stroke-linejoin="round"/><path d="M4.4 4.4H7.6" stroke="#fffbe8" stroke-width="1"/><path d="M1 5.8V14.3H11.6" fill="none" stroke="#2a44b0" stroke-width="1"/><path d="M0 5.6H1.6" stroke="#7a5a9a" stroke-width="0.9"/><path d="M2 14.1L4.6 9.5H15.8L11.8 14.1Z" fill="url(#cf)" stroke="#2a44b0" stroke-width="1" stroke-linejoin="round"/><text x="12.6" y="7.5" font-family="DejaVu Sans, sans-serif" font-weight="bold" font-size="7.7" fill="#1f5a9a" text-anchor="middle">C</text></svg>
<div class="abs" style="left:46px;top:198.6px;width:63px;height:1px;background:repeating-linear-gradient(90deg,#b4b4b4 0px,#b4b4b4 2px,transparent 2px,transparent 3.2px);background-position:1.6px 0"></div>
<div class="abs" style="left:46px;top:212.6px;width:63px;height:1px;background:repeating-linear-gradient(90deg,#b4b4b4 0px,#b4b4b4 2px,transparent 2px,transparent 3.2px);background-position:1.6px 0"></div>
<div class="abs" style="left:46px;top:198.6px;width:1px;height:15px;background:repeating-linear-gradient(180deg,#b4b4b4 0px,#b4b4b4 2px,transparent 2px,transparent 3.2px);background-position:0 1.6px"></div>
<div class="abs" style="left:108px;top:198.6px;width:1px;height:15px;background:repeating-linear-gradient(180deg,#b4b4b4 0px,#b4b4b4 2px,transparent 2px,transparent 3.2px);background-position:0 1.6px"></div>
<div class="t" style="left:44px;top:197.5px;color:#000">EgtProject</div>
<div class="abs" style="left:310px;top:129px;width:464px;height:316px;border:1px solid #a6a6a6;background:#e3e3e3"></div>
<div class="abs" style="left:311px;top:130px;width:462px;height:32px;background:#dcdcdc"></div>
<div class="abs" style="left:311px;top:162px;width:462px;height:1px;background:#a6a6a6"></div>
<div class="abs" style="left:311px;top:130px;width:108px;height:33px;background:#e3e3e3;border-right:1px solid #a6a6a6"></div>
<svg class="ic" style="left:317px;top:139px" width="16" height="16" viewBox="0 0 16 16" ><path d="M1.5 1.5H8.4L11.6 4.6V14.5H1.5Z" fill="#fbfcfe" stroke="#b39a4e" stroke-width="1"/><path d="M8.4 1.5V4.6H11.6Z" fill="#ecd9a0" stroke="#b39a4e" stroke-width="0.7"/><text x="6.7" y="11.8" font-family="DejaVu Sans, sans-serif" font-weight="bold" font-size="8.6" fill="#1f4f86" text-anchor="middle">.c</text></svg>
<div class="t" style="left:335px;top:139px;color:#000;letter-spacing:0.1px">basic.cpp</div>
<svg class="ic" style="left:400px;top:142px" width="10" height="10" viewBox="0 0 10 10"><path d="M0.5 0.5H2.6L5 2.6L7.4 0.5H9.5V2.6L7.4 5L9.5 7.4V9.5H7.4L5 7.4L2.6 9.5H0.5V7.4L2.6 5L0.5 2.6Z" fill="#fff" stroke="#000" stroke-width="1.1" stroke-linejoin="round"/></svg>
<div class="abs" style="left:721px;top:141px;width:10px;height:4px;background:#fff;border:1px solid #5a5a5a;border-radius:0.5px;box-shadow:0 0 1px rgba(255,255,255,.7)"></div>
<div class="abs" style="left:748px;top:141px;width:10px;height:10px;background:#fff;border:1px solid #5a5a5a;border-radius:0.5px;box-shadow:0 0 1px rgba(255,255,255,.7)"></div>
<div class="abs" style="left:748px;top:143px;width:10px;height:1px;background:#5a5a5a"></div>
<div class="abs" style="left:313px;top:165px;width:432px;height:277px;background:#fff"></div>
<div class="abs" style="left:313px;top:165px;width:12px;height:277px;background:#f3f3f3"></div>
<div class="abs" style="left:350px;top:165px;width:1px;height:264px;background:#f2f2f2"></div>
<div class="abs" style="left:353px;top:390px;width:392px;height:15px;background:#e8f2fe"></div>
<div class="abs" style="left:745px;top:165px;width:13px;height:277px;background:#c6c8c7"></div>
<div class="abs" style="left:749px;top:168px;width:6px;height:226px;background:#7b7f80;border-radius:3px"></div>
<div class="abs" style="left:758px;top:165px;width:13px;height:277px;background:#f8f8f8"></div>
<div class="abs" style="left:351px;top:429px;width:394px;height:13px;background:#c6c8c7"></div>
<div class="abs" style="left:354px;top:433px;width:388px;height:6px;background:#7b7f80;border-radius:3px"></div>
<div class="ln" style="left:313px;top:166px;width:28px">1
2
3
4
5
6
7
8
9
10
11
12
13
14
15
16
17
18</div>
<div class="code" style="left:353px;top:166px"><span class="kw">#include</span> <span class="inc">&lt;egt/ui&gt;</span>
<span class="kw">#include</span> <span class="inc">&lt;iostream&gt;</span>
<span class="kw">using</span> <span class="kw">namespace</span> std;
<span class="kw">using</span> <span class="kw">namespace</span> egt;

<span class="kw">int</span> <span class="fn">main</span>(<span class="kw">int</span> argc, <span class="kw">const</span> <span class="kw">char</span> ** argv)
{
    <span class="ty">Application</span> app;
    <span class="ty">TopWindow</span> window;
    <span class="ty">Button</span> button(window, <span class="inc">"Press Me"</span>);
    center(button);
    window.<span class="mf">show</span>();

    <span class="kw">return</span> app.<span class="mf">run</span>();
}


</div>
<svg class="ic" style="left:342px;top:243px" width="8" height="8" viewBox="0 0 8 8"><circle cx="4" cy="4" r="3.5" fill="#fff" stroke="#8a8a8a" stroke-width="1"/><path d="M2 4H6" stroke="#5a5a5a" stroke-width="1"/></svg>
<div class="abs" style="left:778px;top:129px;width:448px;height:316px;border:1px solid #a6a6a6;background:#e3e3e3"></div>
<div class="abs" style="left:779px;top:130px;width:446px;height:32px;background:#dcdcdc"></div>
<div class="abs" style="left:779px;top:162px;width:446px;height:1px;background:#a6a6a6"></div>
<div class="abs" style="left:779px;top:130px;width:93px;height:33px;background:#e3e3e3;border-right:1px solid #a6a6a6"></div>
<svg class="ic" style="left:784px;top:140px" width="16" height="16" viewBox="0 0 16 16" ><rect x="1" y="1" width="5.4" height="5.4" fill="#cfe4fa" stroke="#1f6fc0" stroke-width="1.2"/><rect x="2.2" y="2.2" width="3.0000000000000004" height="1.5000000000000002" fill="#eef6fe"/><rect x="1" y="9.4" width="5.4" height="5.4" fill="#cfe4fa" stroke="#1f6fc0" stroke-width="1.2"/><rect x="2.2" y="10.6" width="3.0000000000000004" height="1.5000000000000002" fill="#eef6fe"/><path d="M8.4 3.8H14.2M8.4 12.2H14.2" stroke="#2f7fc8" stroke-width="1"/><rect x="8.8" y="6.6" width="2.4" height="2.4" fill="#fff" stroke="#1f5fb0" stroke-width="1"/><path d="M12.6 7.8H14.4" stroke="#1f5fb0" stroke-width="1.2"/></svg>
<div class="t" style="left:803px;top:139px;color:#000">Outline</div>
<svg class="ic" style="left:853px;top:142px" width="10" height="10" viewBox="0 0 10 10"><path d="M0.5 0.5H2.6L5 2.6L7.4 0.5H9.5V2.6L7.4 5L9.5 7.4V9.5H7.4L5 7.4L2.6 9.5H0.5V7.4L2.6 5L0.5 2.6Z" fill="#fff" stroke="#000" stroke-width="1.1" stroke-linejoin="round"/></svg>
<svg class="ic" style="left:875px;top:138px" width="16" height="16" viewBox="0 0 16 16" ><circle cx="8.4" cy="8.4" r="5.9" fill="#fff" stroke="#3f9a56" stroke-width="1.1"/><circle cx="8.4" cy="8.4" r="3.4" fill="#e6f4e8" stroke="#3f9a56" stroke-width="1.1"/><circle cx="8.4" cy="8.4" r="1.7" fill="#1f7a30"/></svg>
<div class="t" style="left:895px;top:139px;color:#333">Build Targets</div>
<div class="abs" style="left:1173px;top:141px;width:10px;height:4px;background:#fff;border:1px solid #5a5a5a;border-radius:0.5px;box-shadow:0 0 1px rgba(255,255,255,.7)"></div>
<div class="abs" style="left:1200px;top:141px;width:10px;height:10px;background:#fff;border:1px solid #5a5a5a;border-radius:0.5px;box-shadow:0 0 1px rgba(255,255,255,.7)"></div>
<div class="abs" style="left:1200px;top:143px;width:10px;height:1px;background:#5a5a5a"></div>
<svg class="ic" style="left:988px;top:170px" width="16" height="16" viewBox="0 0 16 16" ><rect x="1.5" y="2.5" width="10" height="10" fill="#dfe9f7" stroke="#9db3d4" stroke-width="1"/><rect x="3.5" y="4.5" width="10.4" height="10.4" fill="#e4edf9" stroke="#8aa2ca" stroke-width="1"/><path d="M5.4 9.7H12" stroke="#1a4a8a" stroke-width="1.1"/></svg>
<svg class="ic" style="left:1013px;top:170px" width="16" height="16" viewBox="0 0 16 16" ><path d="M3.5 1.6V14.4M1.4 11.8L3.5 14.8L5.6 11.8" fill="none" stroke="#5a6672" stroke-width="1"/><text x="6.2" y="8.2" font-family="DejaVu Serif, Liberation Serif, serif" font-weight="bold" font-size="12.4" fill="#1f8a5a">a</text><text x="10.2" y="16.2" font-family="DejaVu Serif, Liberation Serif, serif" font-weight="bold" font-size="12.4" fill="#8a1f8a">z</text></svg>
<svg class="ic" style="left:1041px;top:170px" width="16" height="16" viewBox="0 0 16 16" ><circle cx="8.6" cy="8" r="5" fill="#3f9ae0" stroke="#7fc0f0" stroke-width="1.4"/><path d="M6.4 7.4A2.4 2.4 0 1 1 8.6 10.6" fill="none" stroke="#e6f4fe" stroke-width="1.6"/><path d="M1 1.4L15 14.6" stroke="#24307a" stroke-width="1.3"/></svg>
<svg class="ic" style="left:1068px;top:170px" width="16" height="16" viewBox="0 0 16 16" ><circle cx="6.4" cy="10.4" r="3.2" fill="#a9a9a9" stroke="#8a8a8a" stroke-width="0.8"/><path d="M1 5.4L12.4 15.4" stroke="#24307a" stroke-width="1.3"/><text x="12.6" y="8" font-family="DejaVu Sans, sans-serif" font-size="9.4" fill="#d0103a" text-anchor="middle">S</text></svg>
<svg class="ic" style="left:1095px;top:170px" width="16" height="16" viewBox="0 0 16 16" ><circle cx="8" cy="8.4" r="3.6" fill="#5fb06a" stroke="#3a8a48" stroke-width="1"/><circle cx="7.2" cy="7.6" r="1.4" fill="#8fd09a" opacity="0.7"/></svg>
<svg class="ic" style="left:1122px;top:170px" width="16" height="16" viewBox="0 0 16 16" ><path d="M5 2.4V14M10.4 2.4V14M1.4 5.6H14.4M1.4 10.6H14.4" stroke="#000" stroke-width="2.2"/><path d="M1 1.4L15 14.6" stroke="#3a3a3a" stroke-width="1"/></svg>
<div class="abs" style="left:1150px;top:165px;width:1px;height:28px;background:#cfcfcf"></div>
<svg class="ic" style="left:1163px;top:170px" width="16" height="16" viewBox="0 0 16 16" ><g fill="#d0d0d0" stroke="#c6c6c6" stroke-width="0.6"><circle cx="5.6" cy="4.6" r="3"/><circle cx="11.8" cy="7" r="3"/><circle cx="6.2" cy="11.8" r="3"/></g><g fill="#e2e2e2"><circle cx="5" cy="4" r="1.4"/><circle cx="11.2" cy="6.4" r="1.4"/><circle cx="5.6" cy="11.2" r="1.4"/></g></svg>
<svg class="ic" style="left:1203px;top:170px" width="16" height="16" viewBox="0 0 16 16" ><g fill="#fff" stroke="#5c5c5c" stroke-width="0.9"><circle cx="4.6" cy="3.2" r="1.9"/><circle cx="4.6" cy="8.2" r="1.9"/><circle cx="4.6" cy="13.2" r="1.9"/></g></svg>
<div class="abs" style="left:781px;top:195px;width:442px;height:247px;background:#fff"></div>
<svg class="ic" style="left:802px;top:198px" width="16" height="16" viewBox="0 0 16 16" ><rect x="2" y="3.4" width="4.4" height="4.6" fill="#2f6fb0"/><path d="M9 3.4H13V13H2.6V9.6H9Z" fill="#2f7fc0"/><path d="M9 3.4H13V5H9Z" fill="#1f5fa0"/></svg>
<div class="t" style="left:827px;top:197.5px;color:#000">egt/ui</div>
<svg class="ic" style="left:802px;top:218px" width="16" height="16" viewBox="0 0 16 16" ><rect x="2" y="3.4" width="4.4" height="4.6" fill="#2f6fb0"/><path d="M9 3.4H13V13H2.6V9.6H9Z" fill="#2f7fc0"/><path d="M9 3.4H13V5H9Z" fill="#1f5fa0"/></svg>
<div class="t" style="left:827px;top:217.5px;color:#000"><span style="letter-spacing:-0.12px">iostream</span></div>
<svg class="ic" style="left:802px;top:238px" width="16" height="16" viewBox="0 0 16 16" ><rect x="2.2" y="4.2" width="6" height="1.8" fill="#ee6a72" stroke="#b8283a" stroke-width="0.6"/><rect x="2.2" y="8.2" width="10.4" height="1.8" fill="#c07ad8" stroke="#8a3aa8" stroke-width="0.6"/><rect x="2.2" y="12.2" width="6.8" height="1.8" fill="#5ab6c8" stroke="#2a60b0" stroke-width="0.6"/></svg>
<div class="t" style="left:827px;top:237.5px;color:#000">std</div>
<svg class="ic" style="left:802px;top:258px" width="16" height="16" viewBox="0 0 16 16" ><rect x="2.2" y="4.2" width="6" height="1.8" fill="#ee6a72" stroke="#b8283a" stroke-width="0.6"/><rect x="2.2" y="8.2" width="10.4" height="1.8" fill="#c07ad8" stroke="#8a3aa8" stroke-width="0.6"/><rect x="2.2" y="12.2" width="6.8" height="1.8" fill="#5ab6c8" stroke="#2a60b0" stroke-width="0.6"/></svg>
<div class="t" style="left:827px;top:257.5px;color:#000">egt</div>
<svg class="ic" style="left:802px;top:278px" width="16" height="16" viewBox="0 0 16 16" ><circle cx="8" cy="8.4" r="3.6" fill="#5fb06a" stroke="#3a8a48" stroke-width="1"/><circle cx="7.2" cy="7.6" r="1.4" fill="#8fd09a" opacity="0.7"/></svg>
<div class="t" style="left:827px;top:277.5px;color:#000"><span style="letter-spacing:0.11px">main(int, const char**)</span> <span style="color:#957d47">: int</span></div>
<div class="abs" style="left:310px;top:449px;width:916px;height:298px;border:1px solid #a6a6a6;background:#e3e3e3"></div>
<div class="abs" style="left:311px;top:450px;width:914px;height:32px;background:#dcdcdc"></div>
<div class="abs" style="left:311px;top:482px;width:914px;height:1px;background:#a6a6a6"></div>
<div class="abs" style="left:454px;top:450px;width:97px;height:33px;background:#e3e3e3;border-left:1px solid #a6a6a6;border-right:1px solid #a6a6a6"></div>
<svg class="ic" style="left:314px;top:459px" width="16" height="16" viewBox="0 0 16 16" ><path d="M1.5 0.5H13.6Q14.8 3.6 13.8 7.4Q13.2 11 14.6 14.5H1.5Z" fill="#fbfcfe" stroke="#8090b8" stroke-width="1"/><path d="M10.2 1V14M2 7.6H13.6" stroke="#aab6d0" stroke-width="1"/><circle cx="5.8" cy="4.1" r="2.4" fill="#ee2a34" stroke="#c01420" stroke-width="0.6"/><path d="M3.4 13.4Q3.2 10.4 5.8 8.8Q8.4 10.4 8.2 13.4Z" fill="#f8b01c" stroke="#e07a10" stroke-width="0.8" stroke-linejoin="round"/></svg>
<div class="t" style="left:335px;top:459px;color:#333">Problems</div>
<svg class="ic" style="left:399px;top:459px" width="16" height="16" viewBox="0 0 16 16" ><rect x="3.5" y="2.5" width="11" height="12.6" rx="1" fill="#e6cfa0" stroke="#b89a5e" stroke-width="1"/><rect x="5.4" y="4.4" width="7.4" height="9" fill="#fbfbfd"/><rect x="6.4" y="0.6" width="5.2" height="3" rx="1" fill="#9a9aa6" stroke="#7a7a88" stroke-width="0.6"/><path d="M8 7H12M8 9.4H12M8 11.6H11" stroke="#6f8fd0" stroke-width="0.9"/><path d="M0.8 8.8L3.4 11.8L8 6" fill="none" stroke="#1f6fd0" stroke-width="1.8"/></svg>
<div class="t" style="left:419px;top:459px;color:#333;letter-spacing:-0.15px">Tasks</div>
<svg class="ic" style="left:460px;top:459px" width="16" height="16" viewBox="0 0 16 16" ><rect x="2" y="2" width="11" height="8.6" rx="1.4" fill="#ffffff" stroke="#3565b4" stroke-width="2"/><path d="M4.4 5H8.6M4.4 7.4H10.4" stroke="#2f4f9a" stroke-width="1.1"/><path d="M6 11.4H9V12.6H12V14H3V12.6H6Z" fill="#2f5fae"/></svg>
<div class="t" style="left:479px;top:459px;color:#000;letter-spacing:-0.15px">Console</div>
<svg class="ic" style="left:532px;top:462px" width="10" height="10" viewBox="0 0 10 10"><path d="M0.5 0.5H2.6L5 2.6L7.4 0.5H9.5V2.6L7.4 5L9.5 7.4V9.5H7.4L5 7.4L2.6 9.5H0.5V7.4L2.6 5L0.5 2.6Z" fill="#fff" stroke="#000" stroke-width="1.1" stroke-linejoin="round"/></svg>
<svg class="ic" style="left:554px;top:459px" width="16" height="16" viewBox="0 0 16 16" ><rect x="1.5" y="1.5" width="13" height="12.6" fill="#fbfbfd" stroke="#6a7fa8" stroke-width="1"/><rect x="1" y="1" width="14" height="2.6" fill="#5a78b0"/><path d="M5.6 3.6V14M2 6.4H14M2 9H14M2 11.6H14" stroke="#b9c4da" stroke-width="0.9"/></svg>
<div class="t" style="left:574px;top:459px;color:#333">Properties</div>
<svg class="ic" style="left:643px;top:459px" width="16" height="16" viewBox="0 0 16 16" ><text x="8" y="7" font-family="DejaVu Sans, sans-serif" font-weight="bold" font-size="6.9" fill="#1f2f6f" text-anchor="middle" textLength="15" lengthAdjust="spacingAndGlyphs">1010</text><text x="8" y="13.4" font-family="DejaVu Sans, sans-serif" font-weight="bold" font-size="6.9" fill="#1f2f6f" text-anchor="middle" textLength="15" lengthAdjust="spacingAndGlyphs">0101</text></svg>
<div class="t" style="left:663px;top:459px;color:#333;letter-spacing:-0.2px">Call Graph</div>
<svg class="ic" style="left:1044px;top:458px" width="16" height="16" viewBox="0 0 16 16" ><rect x="2.5" y="5.5" width="11" height="9" fill="#e6e6e6" stroke="#cdcdcd" stroke-width="1"/><rect x="2.5" y="5.2" width="11" height="1.8" fill="#cfcfcf"/><path d="M9.4 9L12 5.6" stroke="#c0c0c0" stroke-width="1.2"/><path d="M10.8 4.6L13 1.6L15.8 2.8L15.2 6L12.4 7Z" fill="#cdcdcd" stroke="#c0c0c0" stroke-width="0.7"/></svg>
<svg class="ic" style="left:1071px;top:458px" width="16" height="16" viewBox="0 0 16 16" ><rect x="2" y="2" width="11" height="8.6" rx="1.4" fill="#eef2fb" stroke="#8fa3cf" stroke-width="2"/><path d="M4.4 5H8.6M4.4 7.4H10.4" stroke="#8b9bc6" stroke-width="1.1"/><path d="M6 11.4H9V12.6H12V14H3V12.6H6Z" fill="#8fa3cf"/></svg>
<svg class="ic" style="left:1097px;top:464px" width="10" height="5" viewBox="0 0 10 5"><path d="M0 0H10L5 5Z" fill="#9a9a9a"/></svg>
<svg class="ic" style="left:1116px;top:458px" width="16" height="16" viewBox="0 0 16 16" ><linearGradient id="nc" x1="0" y1="0" x2="0" y2="1"><stop offset="0" stop-color="#ffffff"/><stop offset="1" stop-color="#dff0fd"/></linearGradient><rect x="2.5" y="3.5" width="13" height="11.6" fill="url(#nc)" stroke="#9a7a2e" stroke-width="1"/><rect x="2" y="3" width="14" height="2.4" fill="#3f86cf"/><path d="M6 14.6Q12.6 14.2 14 7.6" stroke="#f3dc9a" stroke-width="1.5" fill="none"/><path d="M13.4 0.2999999999999998L17.1 4L13.4 7.7L9.7 4Z" fill="#bf961f" stroke="#bf961f" stroke-width="0.5" stroke-linejoin="round"/><path d="M13.4 1.5999999999999999V6.4M11.0 4H15.8" stroke="#fffbe6" stroke-width="1.25"/></svg>
<svg class="ic" style="left:1143px;top:464px" width="10" height="5" viewBox="0 0 10 5"><path d="M0 0H10L5 5Z" fill="#2e3436"/></svg>
<div class="abs" style="left:1173px;top:461px;width:10px;height:4px;background:#fff;border:1px solid #5a5a5a;border-radius:0.5px;box-shadow:0 0 1px rgba(255,255,255,.7)"></div>
<div class="abs" style="left:1200px;top:461px;width:10px;height:10px;background:#fff;border:1px solid #5a5a5a;border-radius:0.5px;box-shadow:0 0 1px rgba(255,255,255,.7)"></div>
<div class="abs" style="left:1200px;top:463px;width:10px;height:1px;background:#5a5a5a"></div>
<div class="t" style="left:313.5px;top:483.5px;color:#333;letter-spacing:-0.03px">No consoles to display at this time.</div>
<div class="abs" style="left:311px;top:499px;width:912px;height:1px;background:#d2d2d2"></div>
<div class="dsep" style="left:774px;top:752px"></div>
<div class="dsep" style="left:1060px;top:752px"></div>
<svg class="ic" style="left:1077px;top:756px" width="16" height="16" viewBox="0 0 16 16" ><linearGradient id="us" x1="0" y1="0" x2="0" y2="1"><stop offset="0" stop-color="#f6dc98"/><stop offset="1" stop-color="#d6a444"/></linearGradient><path d="M7 2.5H12Q15.5 2.5 15.5 7V12.5H8.5V7Q8.5 5 7 4.6Z" fill="url(#us)" stroke="#9a7a3a" stroke-width="1" stroke-linejoin="round"/><path d="M9.4 2.4Q4.2 1.6 3.2 5L0.8 4.4L3.4 9.2L7.6 6.2L5.4 5.6Q6.2 3.8 9.2 4.8Z" fill="#f6f6f6" stroke="#858585" stroke-width="0.9" stroke-linejoin="round"/></svg>
<div class="abs" style="left:1105px;top:750px;width:1px;height:25px;background:#cfcfcf"></div>
<svg class="ic" style="left:1118px;top:756px" width="16" height="16" viewBox="0 0 16 16" ><path d="M6 2.2L10 3.6V14L6 12.6Z" fill="#f2d6ba"/><path d="M1.8 3.6L6 2.2L10 3.6L14.2 2.2V12.6L10 14L6 12.6L1.8 14Z" fill="none" stroke="#f08c28" stroke-width="1.25" stroke-linejoin="round"/><path d="M6 2.2V12.6M10 3.6V14" stroke="#f4ae6c" stroke-width="0.9"/></svg>
<svg class="ic" style="left:1145px;top:756px" width="16" height="16" viewBox="0 0 16 16" ><path d="M0.6 6.6L8 3.4L15.4 6.6L8 9.8Z" fill="#f08c28"/><path d="M4 9V12Q8 14.6 12 12V9L8 10.8Z" fill="#f08c28"/><path d="M2.4 7.4V13.6" stroke="#f08c28" stroke-width="1.1"/></svg>
<svg class="ic" style="left:1173px;top:756px" width="16" height="16" viewBox="0 0 16 16" ><path d="M2.4 13.6L11.6 4.4" stroke="#f08c28" stroke-width="3.1" stroke-linecap="round"/><path d="M9.6 6.4L11.6 4.4" stroke="#f8c898" stroke-width="2" stroke-linecap="round"/><path d="M5 2.4L6.2 3.6M7.6 1.4V2.8M4 5H5.4" stroke="#f08c28" stroke-width="1"/></svg>
<svg class="ic" style="left:1199px;top:756px" width="16" height="16" viewBox="0 0 16 16" ><circle cx="8" cy="8" r="5.6" fill="none" stroke="#f08c28" stroke-width="1.15"/><path d="M8 4.2L9.1 6.8L11.8 7L9.7 8.8L10.4 11.5L8 10L5.6 11.5L6.3 8.8L4.2 7L6.9 6.8Z" fill="none" stroke="#f08c28" stroke-width="1" stroke-linejoin="round"/></svg>
</div></body></html>
